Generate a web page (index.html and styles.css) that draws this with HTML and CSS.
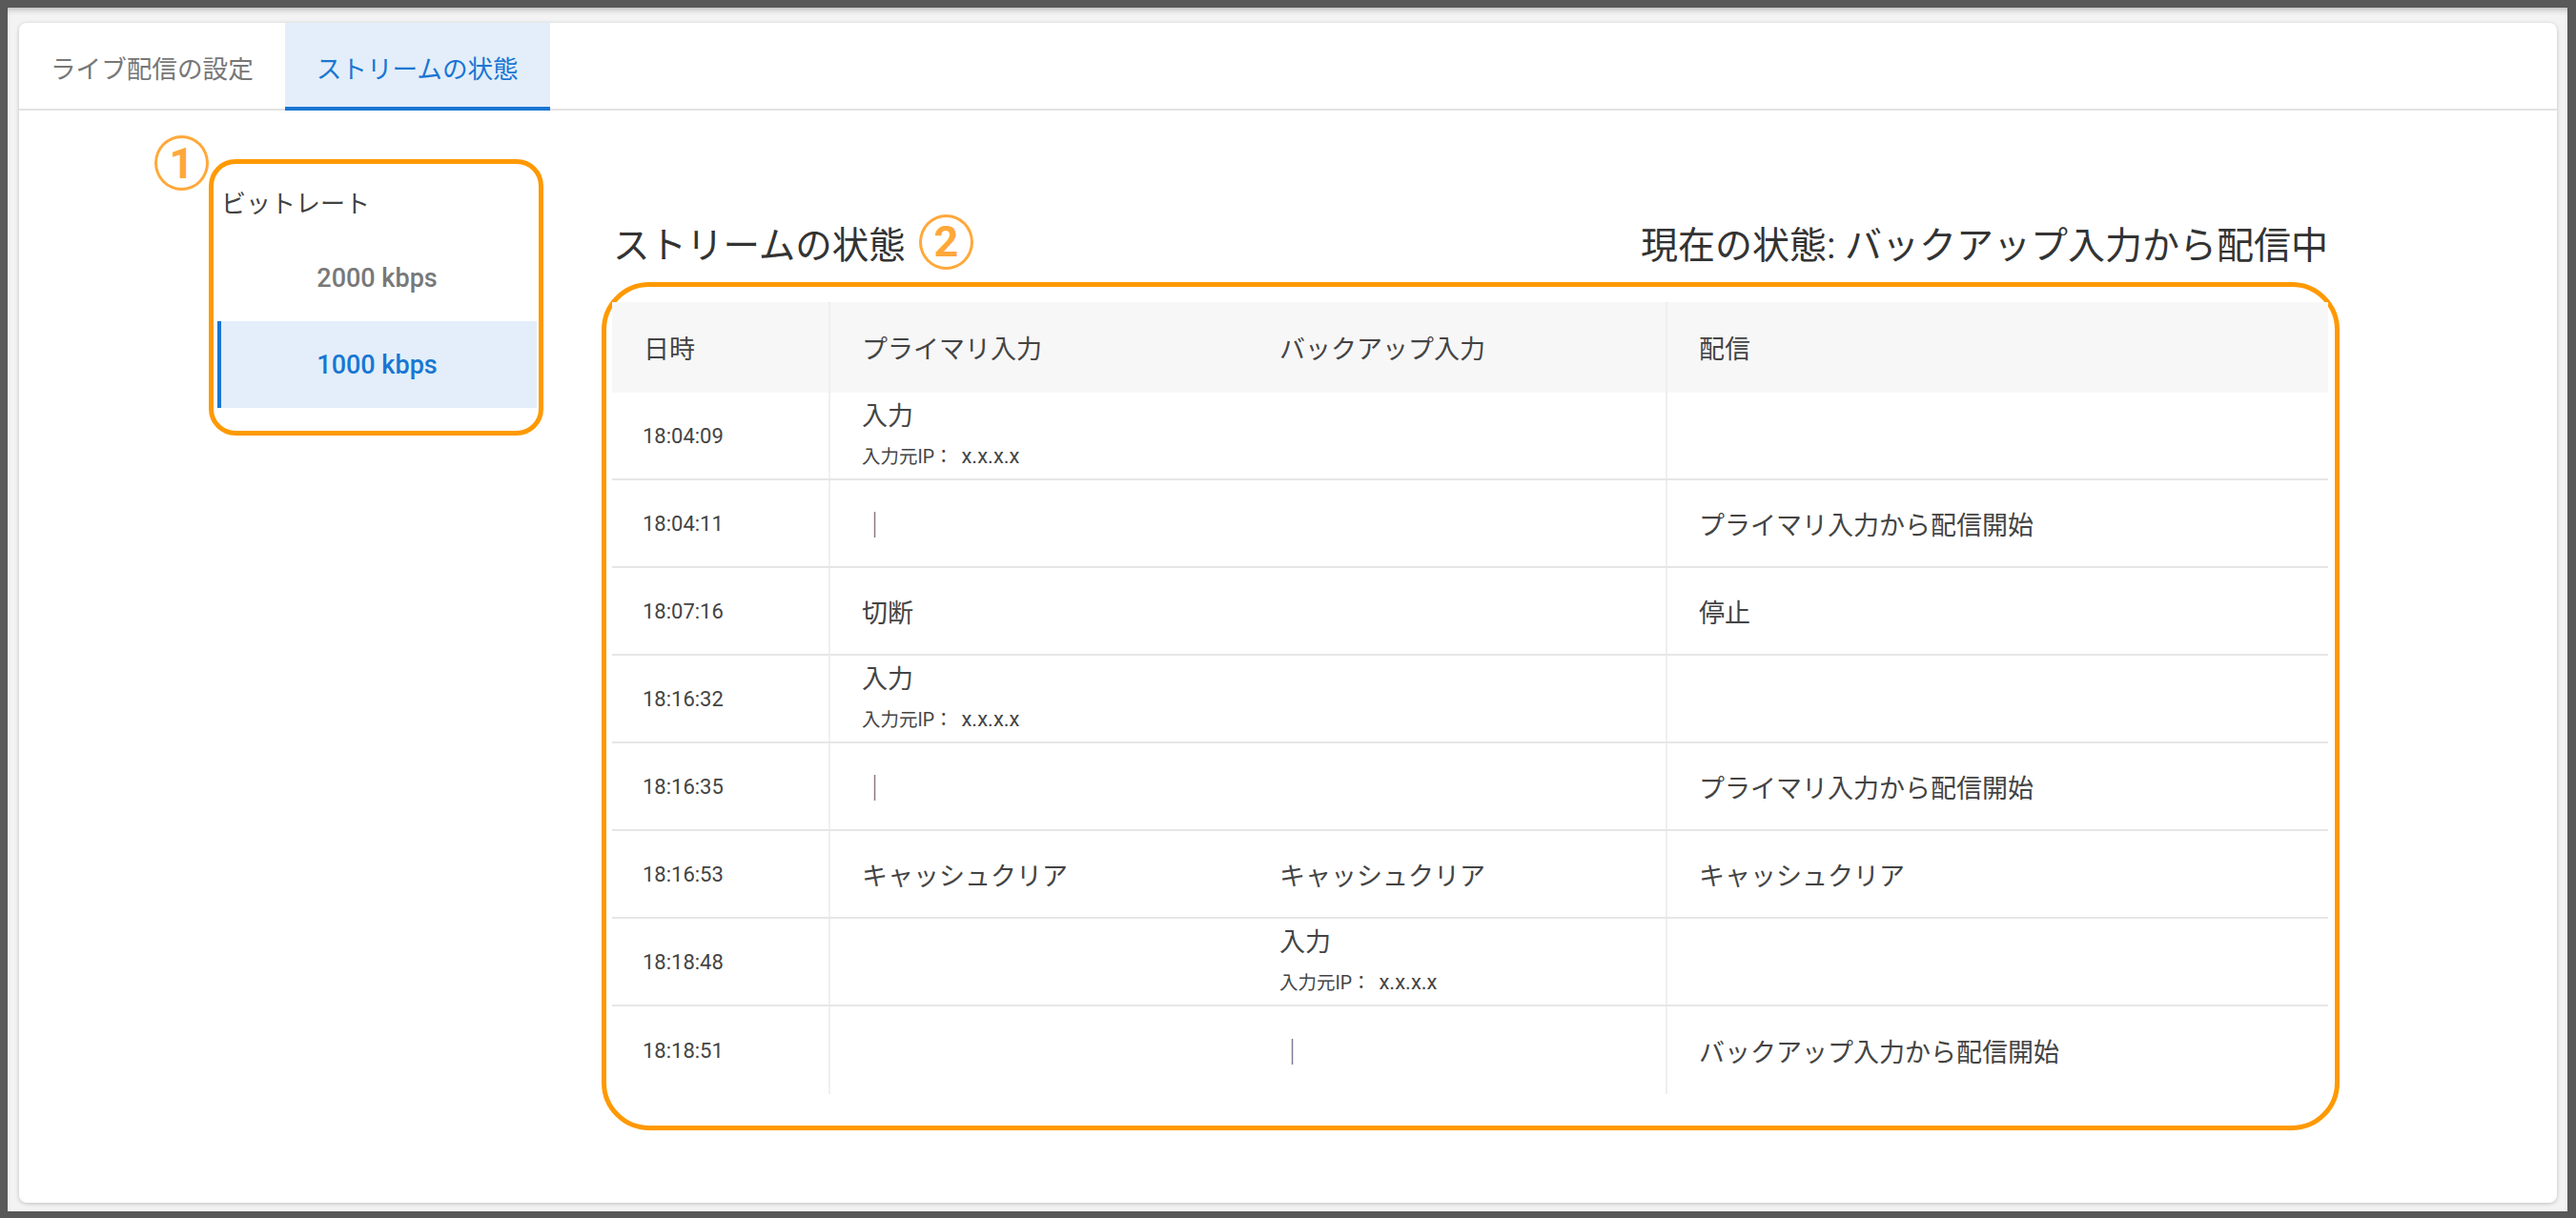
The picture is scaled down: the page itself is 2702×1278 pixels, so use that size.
FILE: index.html
```html
<!DOCTYPE html>
<html lang="ja">
<head>
<meta charset="utf-8">
<title>ストリームの状態</title>
<link rel="stylesheet" href="styles.css">
</head>
<body>
<div class="frame">
  <div class="backdrop">
    <div class="card">
      <nav class="tabs">
        <div class="tab">ライブ配信の設定</div>
        <div class="tab active">ストリームの状態</div>
      </nav>
      <div class="content">
        <aside class="bitrate-box">
          <span class="mark mark-one">1</span>
          <div class="bitrate-label">ビットレート</div>
          <div class="bitrate-item">2000 kbps</div>
          <div class="bitrate-item selected">1000 kbps</div>
        </aside>
        <section class="status">
          <div class="status-head">
            <h2 class="status-title">ストリームの状態<span class="mark mark-two">2</span></h2>
            <div class="status-current">現在の状態: バックアップ入力から配信中</div>
          </div>
          <div class="log-frame">
            <div class="log">
              <div class="log-row log-header">
                <div class="c c-time">日時</div>
                <div class="c">プライマリ入力</div>
                <div class="c c-div">バックアップ入力</div>
                <div class="c">配信</div>
              </div>
              <div class="log-row">
                <div class="c c-time time">18:04:09</div>
                <div class="c"><div class="stack"><div class="ev">入力</div><div class="ip">入力元IP： <span class="addr">x.x.x.x</span></div></div></div>
                <div class="c c-div"></div>
                <div class="c"></div>
              </div>
              <div class="log-row">
                <div class="c c-time time">18:04:11</div>
                <div class="c"><span class="pipe">｜</span></div>
                <div class="c c-div"></div>
                <div class="c">プライマリ入力から配信開始</div>
              </div>
              <div class="log-row">
                <div class="c c-time time">18:07:16</div>
                <div class="c">切断</div>
                <div class="c c-div"></div>
                <div class="c">停止</div>
              </div>
              <div class="log-row">
                <div class="c c-time time">18:16:32</div>
                <div class="c"><div class="stack"><div class="ev">入力</div><div class="ip">入力元IP： <span class="addr">x.x.x.x</span></div></div></div>
                <div class="c c-div"></div>
                <div class="c"></div>
              </div>
              <div class="log-row">
                <div class="c c-time time">18:16:35</div>
                <div class="c"><span class="pipe">｜</span></div>
                <div class="c c-div"></div>
                <div class="c">プライマリ入力から配信開始</div>
              </div>
              <div class="log-row">
                <div class="c c-time time">18:16:53</div>
                <div class="c">キャッシュクリア</div>
                <div class="c c-div">キャッシュクリア</div>
                <div class="c">キャッシュクリア</div>
              </div>
              <div class="log-row">
                <div class="c c-time time">18:18:48</div>
                <div class="c"></div>
                <div class="c c-div"><div class="stack"><div class="ev">入力</div><div class="ip">入力元IP： <span class="addr">x.x.x.x</span></div></div></div>
                <div class="c"></div>
              </div>
              <div class="log-row">
                <div class="c c-time time">18:18:51</div>
                <div class="c"></div>
                <div class="c c-div"><span class="pipe">｜</span></div>
                <div class="c">バックアップ入力から配信開始</div>
              </div>
            </div>
          </div>
        </section>
      </div>
    </div>
  </div>
</div>
</body>
</html>
```

FILE: styles.css
```css
html, body {
  margin: 0;
  padding: 0;
}

body {
  font-family: Roboto, "Noto Sans CJK JP", sans-serif;
  color: #424242;
}

.frame {
  box-sizing: border-box;
  height: 100vh;
  background: #595959;
  padding: 8px 9px 7px 8px;
  display: flex;
}

.backdrop {
  flex: 1;
  display: flex;
  background: #f3f3f3;
  padding: 16px 11px 9px 12px;
  box-shadow: inset 0 5px 6px -3px rgba(0, 0, 0, 0.25);
}

.card {
  flex: 1;
  display: flex;
  flex-direction: column;
  background: #ffffff;
  border-radius: 8px;
  box-shadow: 0 1px 4px rgba(0, 0, 0, 0.22);
  overflow: hidden;
}

/* Tabs */
.tabs {
  display: flex;
  border-bottom: 2px solid #e2e2e2;
}

.tab {
  height: 92px;
  margin-bottom: -2px;
  padding: 0 33px;
  display: flex;
  align-items: center;
  font-family: "Noto Sans CJK JP", sans-serif;
  font-size: 26.6px;
  color: #777777;
}

.tab.active {
  background: #e3eefa;
  color: #1976d2;
  box-shadow: inset 0 -4px 0 #1976d2;
}

/* Content */
.content {
  display: flex;
  align-items: flex-start;
  gap: 61px;
  padding: 51px 228px 0 199px;
}

/* Bitrate list (annotated box 1) */
.bitrate-box {
  position: relative;
  flex: none;
  box-sizing: border-box;
  width: 351px;
  height: 290px;
  border: 5px solid #ff9900;
  border-radius: 28px;
  padding: 0 2px 24px 4px;
}

.bitrate-label {
  padding: 22px 0 16px 4px;
  line-height: 36px;
  font-family: "Noto Sans CJK JP", sans-serif;
  font-size: 26px;
  color: #424242;
}

.bitrate-item {
  height: 91px;
  display: flex;
  align-items: center;
  justify-content: center;
  font-family: Roboto, sans-serif;
  font-weight: 500;
  font-size: 27px;
  color: #787878;
}

.bitrate-item.selected {
  background: #e3eefa;
  color: #1976d2;
  box-shadow: inset 4px 0 0 #1976d2;
}

/* Circled annotation numbers */
.mark {
  box-sizing: border-box;
  display: inline-flex;
  align-items: center;
  justify-content: center;
  width: 57px;
  height: 58px;
  border: 3px solid #ffa83a;
  border-radius: 50%;
  color: #ffa83a;
  font-family: Roboto, sans-serif;
  font-weight: 700;
  font-size: 45px;
  line-height: 1;
}

.mark-one {
  position: absolute;
  left: -62px;
  top: -30px;
}

.mark-two {
  margin-left: 14px;
}

/* Status section */
.status {
  flex: 1;
  padding-top: 58px;
}

.status-head {
  height: 57px;
  display: flex;
  align-items: center;
  justify-content: space-between;
  padding: 0 12px;
  margin-bottom: 14px;
}

.status-title {
  margin: 0;
  display: flex;
  align-items: center;
  font-family: "Noto Sans CJK JP", sans-serif;
  font-weight: 400;
  font-size: 38.5px;
  color: #333333;
}

.status-current {
  font-family: Roboto, "Noto Sans CJK JP", sans-serif;
  font-size: 39px;
  color: #333333;
}

/* Log table (annotated box 2) */
.log-frame {
  border: 5px solid #ff9900;
  border-radius: 50px;
  padding: 16px 7px 33px 6px;
}

.log-row {
  display: grid;
  grid-template-columns: 229px 438px 440px 1fr;
  height: 92px;
  box-sizing: border-box;
  border-bottom: 2px solid #e6e6e6;
}

.log-row:last-child {
  border-bottom: none;
}

.log-header {
  height: 95px;
  background: #f7f7f7;
  border-bottom: none;
}

.c {
  display: flex;
  align-items: center;
  padding-left: 33px;
  font-family: Roboto, "Noto Sans CJK JP", sans-serif;
  font-size: 27px;
  color: #444444;
  box-sizing: border-box;
}

.c-time,
.c-div {
  border-right: 2px solid #efefef;
}

.time {
  font-size: 22px;
  padding-left: 32px;
}

.stack {
  display: flex;
  flex-direction: column;
}

.ev {
  line-height: 30px;
  font-size: 27px;
}

.ip {
  margin-top: 14px;
  line-height: 26px;
  font-size: 19.5px;
  word-spacing: 4px;
}

.addr {
  font-size: 22px;
  word-spacing: 0;
}

.pipe {
  font-family: "Noto Sans CJK JP", sans-serif;
  color: #666666;
  font-size: 27px;
}
```
